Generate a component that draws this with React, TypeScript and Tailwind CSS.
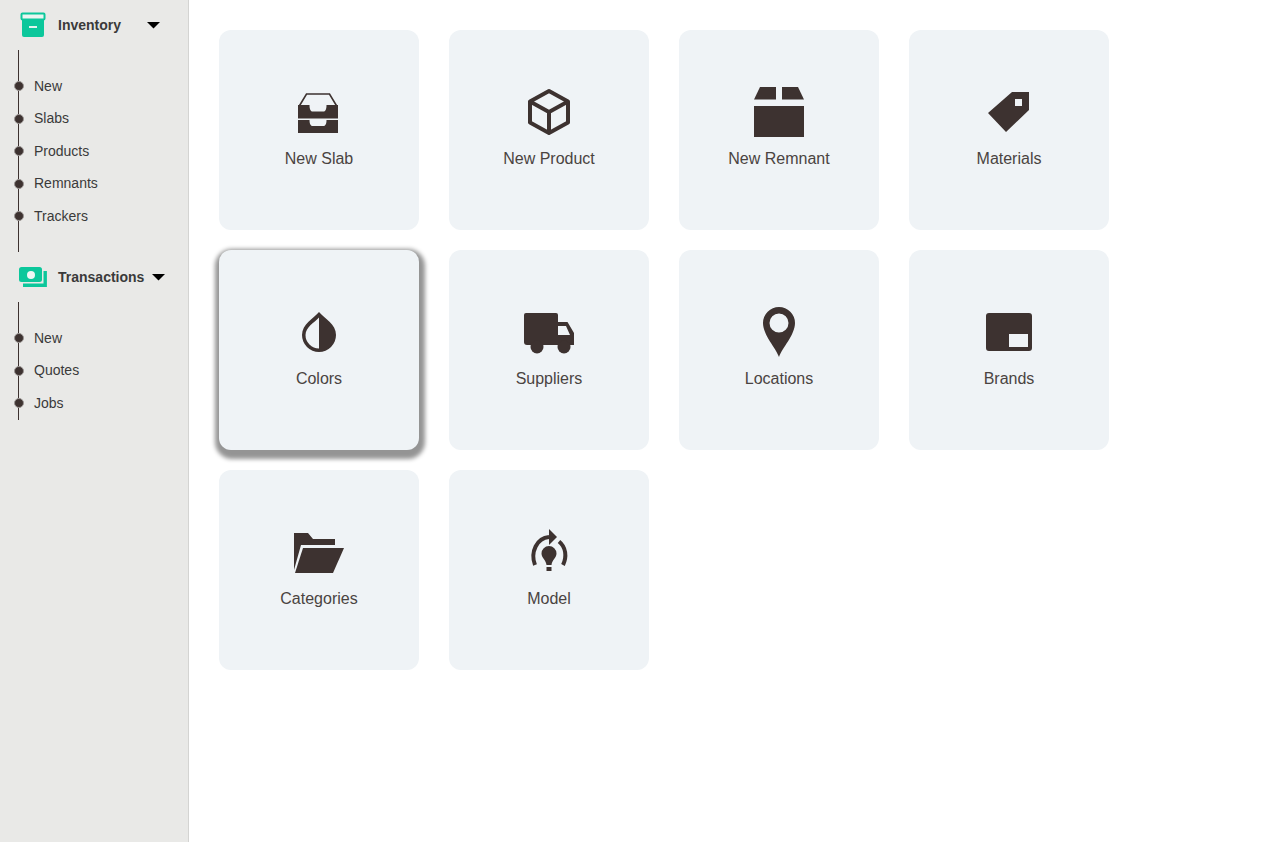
import React from "react";

const INK = "#3d3230";

function Svg({ children }: { children: React.ReactNode }) {
  return (
    <svg width="60" height="60" viewBox="0 0 60 60" fill={INK} className="block">
      {children}
    </svg>
  );
}

const icons: Record<string, React.ReactNode> = {
  slab: (
    <Svg>
      <path d="M10 26.5L17.5 14H40.5L48 26.5" fill="none" stroke={INK} strokeWidth="1.6" />
      <path d="M9 25H20.5c0 4 1 6.5 3 6.5h11c2 0 3-2.5 3-6.5H49V38.5H9Z" />
      <path d="M9 40H20.5c0 3.5 1 6 3 6h11c2 0 3-2.5 3-6H49V53H9Z" />
    </Svg>
  ),
  cube: (
    <Svg>
      <path
        d="M30 11L49 21.5V42.5L30 53L11 42.5V21.5ZM11 21.5L30 32L49 21.5M30 32V53"
        fill="none"
        stroke={INK}
        strokeWidth="4"
        strokeLinejoin="round"
      />
    </Svg>
  ),
  box: (
    <Svg>
      <path d="M5 26H55V57H5Z" />
      <path d="M11 7H27V19.5H5Z" />
      <path d="M33 7H49L55 19.5H33Z" />
    </Svg>
  ),
  tag: (
    <Svg>
      <path fillRule="evenodd" d="M33 12L9 33L27 52L50 30V12ZM36 19H43V26H36Z" />
    </Svg>
  ),
  drop: (
    <Svg>
      <path
        fillRule="evenodd"
        d="M30 12C24 19 13 24 13 35A17 17 0 0 0 47 35C47 24 36 19 30 12ZM30 17.5V48.5A13.5 13.5 0 0 1 16.5 35C16.5 27 25 23 30 17.5Z"
      />
    </Svg>
  ),
  truck: (
    <Svg>
      <path d="M7 13H37a2 2 0 0 1 2 2V45H8a3 3 0 0 1-3-3V15a2 2 0 0 1 2-2Z" />
      <path fillRule="evenodd" d="M39 22H48.5L55 33V45H39ZM39 26V35H51L47 26Z" />
      <circle cx="18" cy="47" r="6.5" />
      <circle cx="45" cy="47" r="6.5" />
    </Svg>
  ),
  pin: (
    <Svg>
      <path
        fillRule="evenodd"
        d="M30 57C27 48 14 35 14 23A16 16 0 0 1 46 23C46 35 33 48 30 57ZM30 13.5A9.5 9.5 0 1 0 30 32.5A9.5 9.5 0 1 0 30 13.5Z"
      />
    </Svg>
  ),
  brand: (
    <Svg>
      <path
        fillRule="evenodd"
        d="M10 13H50a3 3 0 0 1 3 3V48a3 3 0 0 1-3 3H10a3 3 0 0 1-3-3V16a3 3 0 0 1 3-3ZM30 34V47H49V34Z"
      />
    </Svg>
  ),
  folder: (
    <Svg>
      <path d="M5 13H19L24 19H46V25H12L5 50Z" />
      <path d="M14 28H55L44 53H6Z" />
    </Svg>
  ),
  model: (
    <Svg>
      <path d="M30 17C18 18 11 32 16 45" fill="none" stroke={INK} strokeWidth="4" />
      <path d="M40 21.5C47 27 48 37 44 45" fill="none" stroke={INK} strokeWidth="4" />
      <path d="M30 9L38 17L30 25Z" />
      <path d="M30 26A7.5 7.5 0 0 1 37.5 33.5C37.5 38 33 40 32.5 45H27.5C27 40 22.5 38 22.5 33.5A7.5 7.5 0 0 1 30 26Z" />
      <rect x="27.5" y="47" width="5" height="4" />
    </Svg>
  ),
};

const cards = [
  { label: "New Slab", icon: "slab" },
  { label: "New Product", icon: "cube" },
  { label: "New Remnant", icon: "box" },
  { label: "Materials", icon: "tag" },
  { label: "Colors", icon: "drop", active: true },
  { label: "Suppliers", icon: "truck" },
  { label: "Locations", icon: "pin" },
  { label: "Brands", icon: "brand" },
  { label: "Categories", icon: "folder" },
  { label: "Model", icon: "model" },
];

function Caret() {
  return (
    <svg width="13" height="7" viewBox="0 0 13 7" className="block">
      <path d="M0 0H13L6.5 6.5Z" fill="#000" />
    </svg>
  );
}

function NavList({ items, last }: { items: string[]; last?: boolean }) {
  return (
    <ul className={last ? "ml-[18px] border-l border-[#3d3230] pt-[20px]" : "ml-[18px] border-l border-[#3d3230] pt-[20px] pb-[19px]"}>
      {items.map((t) => (
        <li key={t} className="relative flex h-[32.5px] items-center pl-[15px] text-[14px] text-[#3a3a3a]">
          <span className="absolute left-[-5px] h-[10px] w-[10px] rounded-full border border-[#9a9593] bg-[#3d3230]" />
          {t}
        </li>
      ))}
    </ul>
  );
}

export default function App() {
  return (
    <div className="flex h-screen bg-white font-['Liberation_Sans',Arial,sans-serif]">
      <aside className="w-[189px] shrink-0 border-r border-[#d4d4d2] bg-[#e9e9e7]">
        <div className="flex h-[50px] items-center">
          <svg width="28" height="26" viewBox="0 0 28 26" className="ml-[19px] block">
            <rect x="3" y="5" width="22" height="20" rx="2" fill="#0cc79b" />
            <rect x="2.5" y="1.5" width="23" height="6" rx="1" fill="#e9f5f1" stroke="#0cc79b" strokeWidth="2" />
            <rect x="10" y="14" width="8" height="2" fill="#e4f3ee" />
          </svg>
          <span className="ml-[11px] text-[14px] font-bold text-[#3a3a3a]">Inventory</span>
          <span className="ml-[26px]">
            <Caret />
          </span>
        </div>
        <NavList items={["New", "Slabs", "Products", "Remnants", "Trackers"]} />
        <div className="flex h-[50.5px] items-center">
          <svg width="28" height="20" viewBox="0 0 28 20" className="ml-[19px] block">
            <path d="M4 18.2H26.2V4" fill="none" stroke="#0cc79b" strokeWidth="3.4" />
            <rect x="0" y="0" width="23" height="15" rx="2.5" fill="#0cc79b" />
            <circle cx="12" cy="8" r="4" fill="#eef7f4" />
          </svg>
          <span className="ml-[11px] pt-[2px] text-[14px] font-bold text-[#3a3a3a]">Transactions</span>
          <span className="ml-[8px] pt-[2px]">
            <Caret />
          </span>
        </div>
        <NavList items={["New", "Quotes", "Jobs"]} last />
      </aside>
      <main className="flex-1 pl-[30px] pt-[30px]">
        <div className="grid grid-cols-[repeat(4,200px)] gap-x-[30px] gap-y-[20px]">
          {cards.map((c) => (
            <div
              key={c.label}
              className={
                c.active
                  ? "flex h-[200px] flex-col items-center rounded-[12px] bg-[#eff3f6] pt-[50px] shadow-[1px_4px_4px_5px_rgba(0,0,0,0.42)]"
                  : "flex h-[200px] flex-col items-center rounded-[12px] bg-[#eff3f6] pt-[50px]"
              }
            >
              {icons[c.icon]}
              <span className="mt-[7px] text-[16px] leading-[24px] text-[#4a4341]">{c.label}</span>
            </div>
          ))}
        </div>
      </main>
    </div>
  );
}
